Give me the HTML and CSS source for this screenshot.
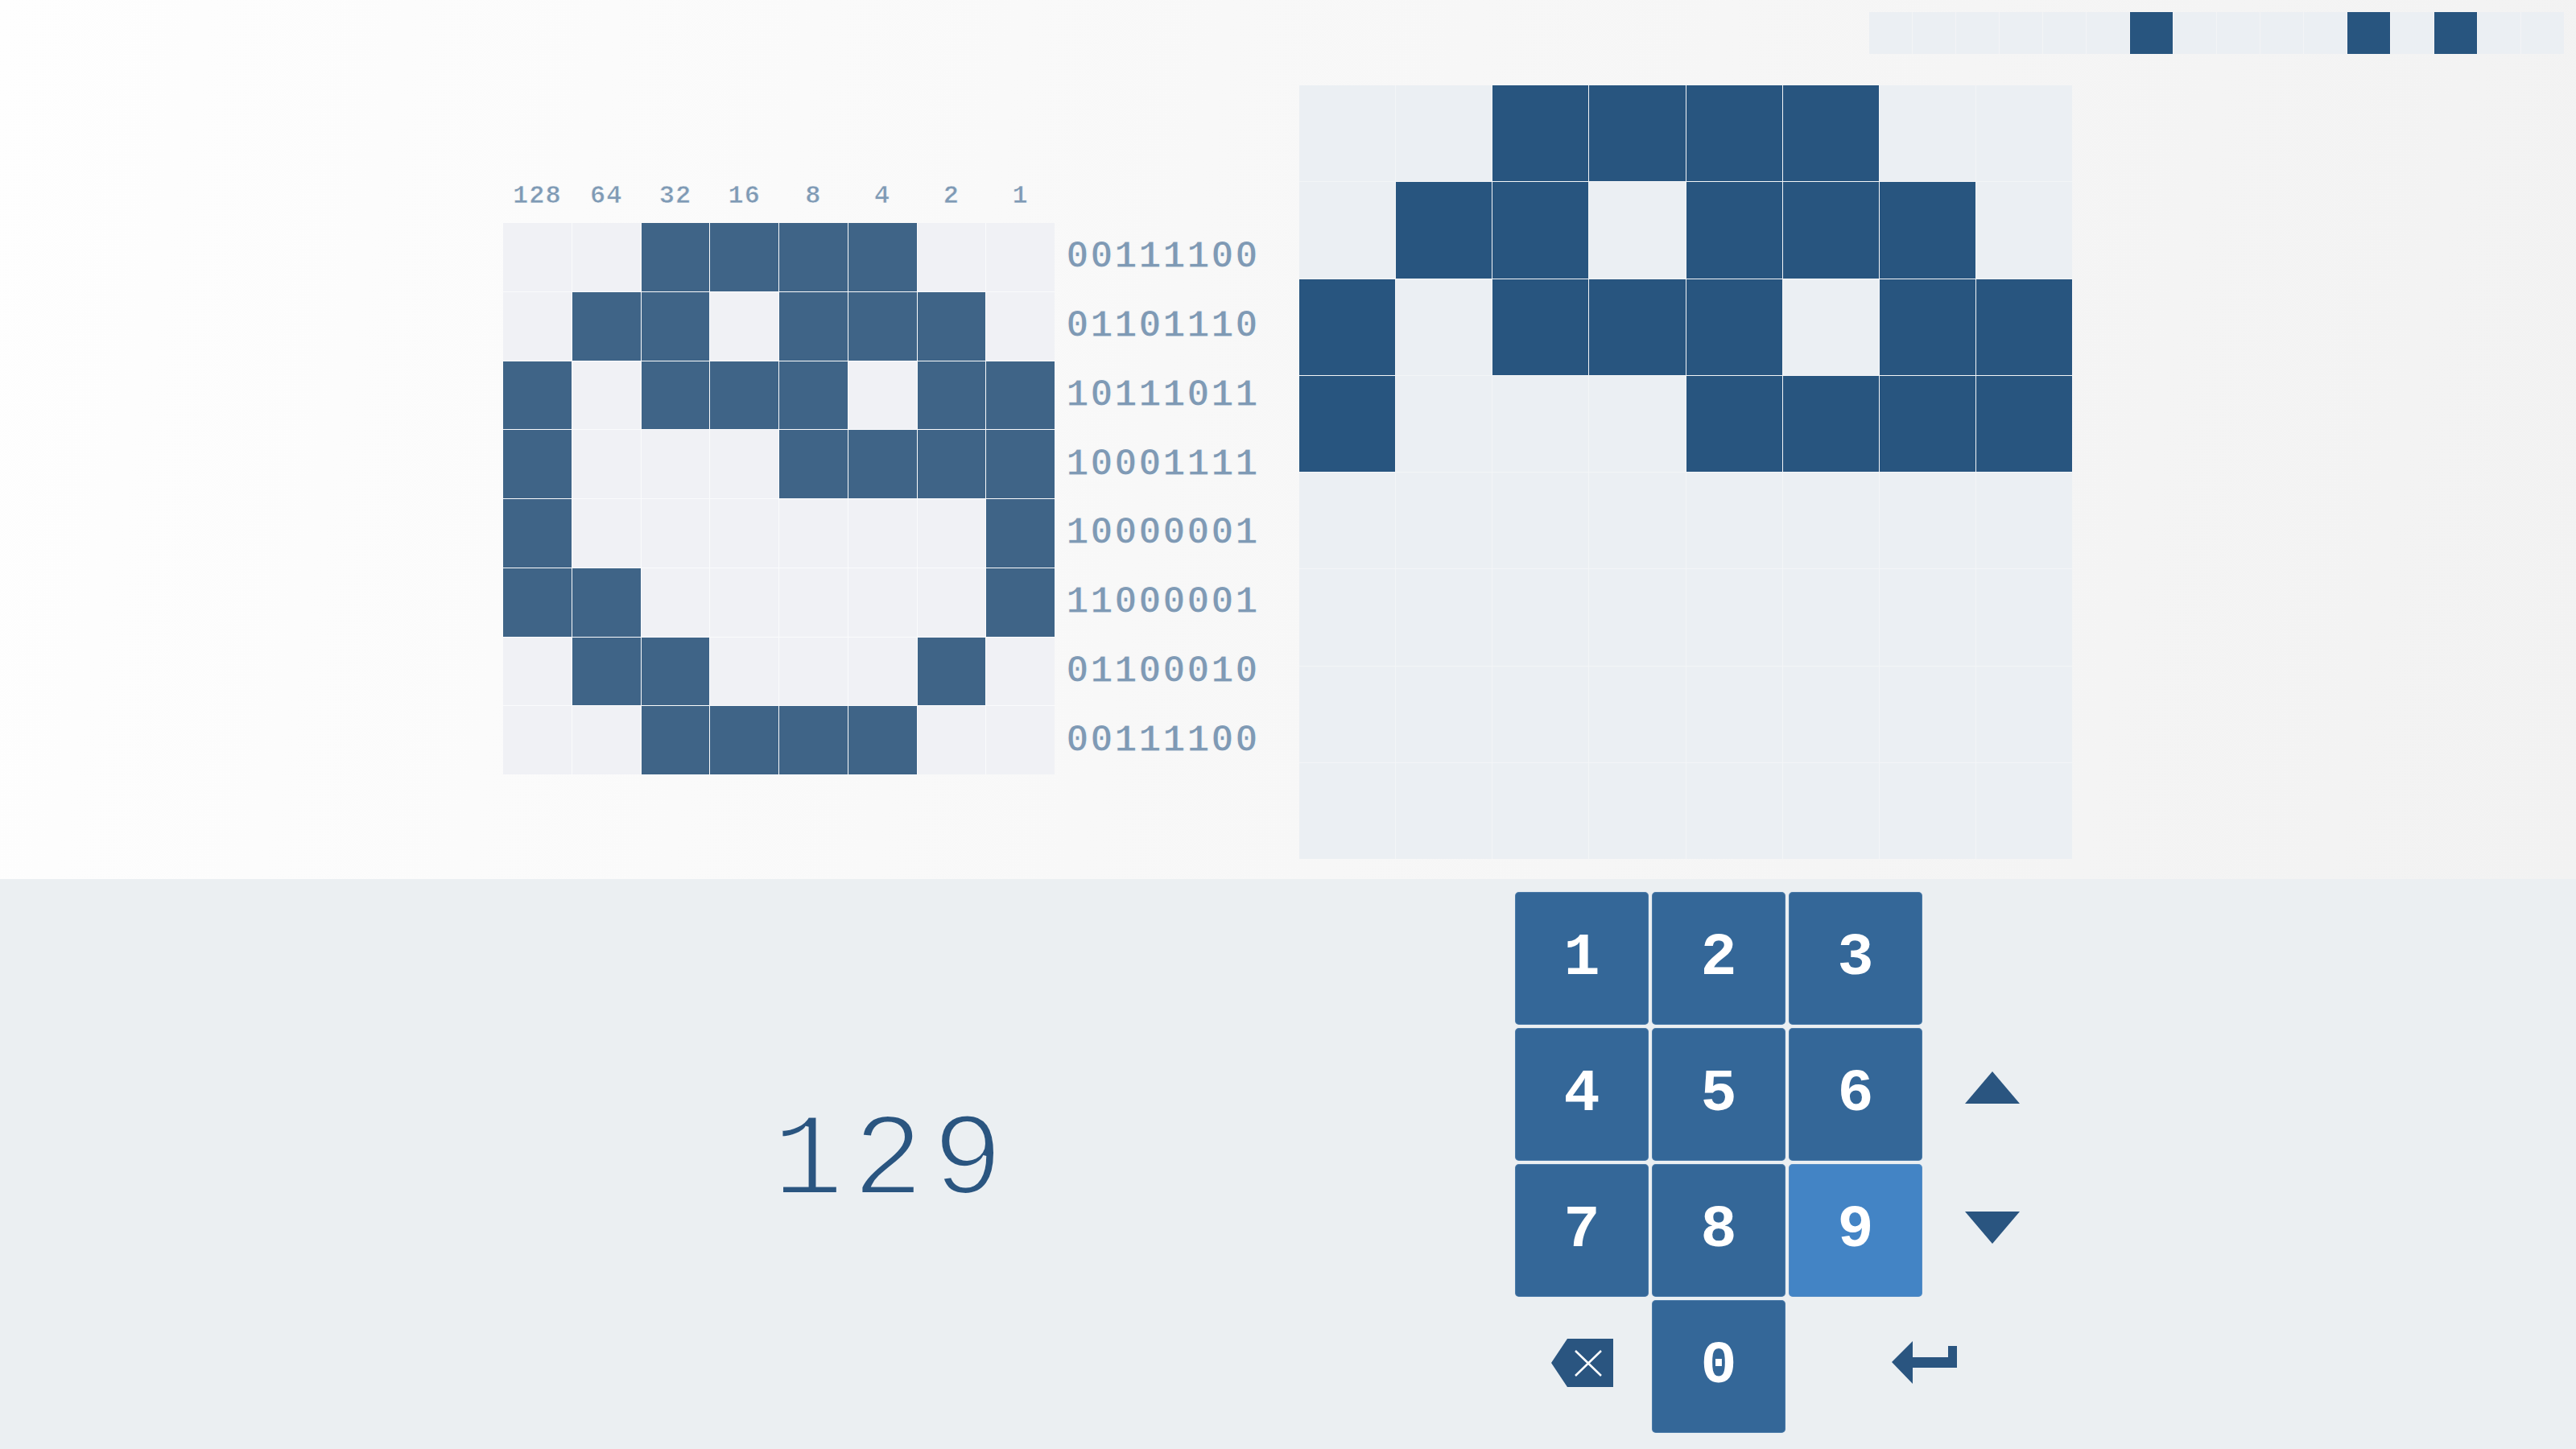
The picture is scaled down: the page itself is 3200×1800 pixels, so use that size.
FILE: index.html
```html
<!DOCTYPE html>
<html lang="en">
<head>
<meta charset="utf-8">
<title>Binary Pixel Encoder</title>
<link rel="stylesheet" href="styles.css">
</head>
<body>
<div class="top">
  <div class="bits">
    <div class="b"></div><div class="b"></div><div class="b"></div><div class="b"></div>
    <div class="b"></div><div class="b"></div><div class="b on"></div><div class="b"></div>
    <div class="b"></div><div class="b"></div><div class="b"></div><div class="b on"></div>
    <div class="b"></div><div class="b on"></div><div class="b"></div><div class="b"></div>
  </div>
  <div class="stage">
    <div class="encoder">
      <div class="heads">
        <span>128</span><span>64</span><span>32</span><span>16</span><span>8</span><span>4</span><span>2</span><span>1</span>
      </div>
      <div class="spacer"></div>
      <div class="pix">
        <i></i><i></i><i class="on"></i><i class="on"></i><i class="on"></i><i class="on"></i><i></i><i></i>
        <i></i><i class="on"></i><i class="on"></i><i></i><i class="on"></i><i class="on"></i><i class="on"></i><i></i>
        <i class="on"></i><i></i><i class="on"></i><i class="on"></i><i class="on"></i><i></i><i class="on"></i><i class="on"></i>
        <i class="on"></i><i></i><i></i><i></i><i class="on"></i><i class="on"></i><i class="on"></i><i class="on"></i>
        <i class="on"></i><i></i><i></i><i></i><i></i><i></i><i></i><i class="on"></i>
        <i class="on"></i><i class="on"></i><i></i><i></i><i></i><i></i><i></i><i class="on"></i>
        <i></i><i class="on"></i><i class="on"></i><i></i><i></i><i></i><i class="on"></i><i></i>
        <i></i><i></i><i class="on"></i><i class="on"></i><i class="on"></i><i class="on"></i><i></i><i></i>
      </div>
      <div class="codes">
        <span>00111100</span><span>01101110</span><span>10111011</span><span>10001111</span>
        <span>10000001</span><span>11000001</span><span>01100010</span><span>00111100</span>
      </div>
    </div>
    <div class="canvas">
      <i></i><i></i><i class="on"></i><i class="on"></i><i class="on"></i><i class="on"></i><i></i><i></i>
      <i></i><i class="on"></i><i class="on"></i><i></i><i class="on"></i><i class="on"></i><i class="on"></i><i></i>
      <i class="on"></i><i></i><i class="on"></i><i class="on"></i><i class="on"></i><i></i><i class="on"></i><i class="on"></i>
      <i class="on"></i><i></i><i></i><i></i><i class="on"></i><i class="on"></i><i class="on"></i><i class="on"></i>
      <i></i><i></i><i></i><i></i><i></i><i></i><i></i><i></i>
      <i></i><i></i><i></i><i></i><i></i><i></i><i></i><i></i>
      <i></i><i></i><i></i><i></i><i></i><i></i><i></i><i></i>
      <i></i><i></i><i></i><i></i><i></i><i></i><i></i><i></i>
    </div>
  </div>
</div>
<div class="bottom">
  <div class="display"><span class="value">129</span></div>
  <div class="keypad">
    <button class="key">1</button>
    <button class="key">2</button>
    <button class="key">3</button>
    <div class="slot"></div>
    <button class="key">4</button>
    <button class="key">5</button>
    <button class="key">6</button>
    <div class="slot arrow up">
      <svg width="68" height="40" viewBox="0 0 68 40"><polygon points="34,0 68,40 0,40"/></svg>
    </div>
    <button class="key">7</button>
    <button class="key">8</button>
    <button class="key active">9</button>
    <div class="slot arrow down">
      <svg width="68" height="40" viewBox="0 0 68 40"><polygon points="0,0 68,0 34,40"/></svg>
    </div>
    <div class="slot icon">
      <svg width="77" height="60" viewBox="0 0 77 60">
        <polygon class="fill" points="0,30 20,0 77,0 77,60 20,60"/>
        <path class="x" d="M30 15 L62 46 M62 15 L30 46"/>
      </svg>
    </div>
    <button class="key">0</button>
    <div class="slot icon enter">
      <svg width="81" height="53" viewBox="0 0 81 53">
        <path class="fill" d="M0 26 L26 0 L26 20 L70 20 L70 6 L81 6 L81 33 L26 33 L26 53 Z"/>
      </svg>
    </div>
  </div>
</div>
</body>
</html>
```
FILE: styles.css
```css
* { box-sizing: border-box; margin: 0; padding: 0; }
html, body { width: 3200px; height: 1800px; overflow: hidden; }
body {
  font-family: "Liberation Mono", "Courier New", monospace;
  background: #ebeff2;
}

.top {
  height: 1092px;
  display: flex;
  flex-direction: column;
  background: linear-gradient(100deg, #fefefe 0%, #f8f8f8 45%, #f2f2f2 100%);
}

/* bit strip */
.bits {
  align-self: flex-end;
  margin: 15px 15px 0 0;
  width: 863px;
  height: 52px;
  display: grid;
  grid-template-columns: repeat(16, 1fr);
  gap: 1px;
  background: #f3f4f6;
}
.bits .b { background: #ebeff3; }
.bits .b.on { background: #28557f; }

.stage {
  display: flex;
  align-items: flex-start;
}

/* left encoder */
.encoder {
  margin: 155px 0 0 625px;
  display: grid;
  grid-template-columns: 685px 250px;
  grid-template-rows: 44px 685px;
  column-gap: 14px;
  row-gap: 11px;
}
.heads {
  display: grid;
  grid-template-columns: repeat(8, 1fr);
  column-gap: 1px;
  font-weight: bold;
  font-size: 32px;
  line-height: 44px;
  letter-spacing: 1px;
  color: #7f9ab5;
  text-align: center;
  -webkit-text-stroke: 0.6px #fafafa;
}
.pix {
  display: grid;
  grid-template-columns: repeat(8, 1fr);
  grid-template-rows: repeat(8, 1fr);
  gap: 1px;
  background: #fafbfc;
}
.pix i { background: #f0f1f5; }
.pix i.on { background: #3f6487; }
.codes {
  display: grid;
  grid-template-rows: repeat(8, 1fr);
  row-gap: 1px;
  font-weight: bold;
  font-size: 48px;
  letter-spacing: 1.2px;
  color: #7f9ab5;
  -webkit-text-stroke: 1.2px #f8f8f8;
}
.codes span {
  display: flex;
  align-items: center;
}

/* right canvas */
.canvas {
  margin: 39px 0 0 40px;
  width: 960px;
  height: 961px;
  display: grid;
  grid-template-columns: repeat(8, 1fr);
  grid-template-rows: repeat(8, 1fr);
  gap: 1px;
  background: #f3f5f7;
}
.canvas i { background: #ebeff3; }
.canvas i.on { background: #28557f; }

/* bottom */
.bottom {
  height: 708px;
  display: flex;
  align-items: flex-start;
  background: #ebeff2;
}
.display {
  width: 1882px;
  height: 708px;
  padding: 0 0 5px 324px;
  display: flex;
  align-items: center;
  justify-content: center;
}
.value {
  font-size: 147px;
  letter-spacing: 11px;
  margin-right: -11px;
  color: #2a5580;
  -webkit-text-stroke: 4px #ebeff2;
}

.keypad {
  margin-top: 16px;
  display: grid;
  grid-template-columns: repeat(4, 166px);
  grid-template-rows: repeat(4, 165px);
  gap: 4px;
}
.key {
  border: none;
  border-radius: 5px;
  background: #346798;
  color: #ffffff;
  font-family: "Liberation Mono", "Courier New", monospace;
  font-weight: bold;
  font-size: 75px;
  display: flex;
  align-items: center;
  justify-content: center;
  box-shadow: inset 0 0 0 1px rgba(120,160,200,0.35);
}
.key.active { background: #4384c5; }

.slot {
  display: flex;
  align-items: center;
  justify-content: center;
}
.slot svg { display: block; }
.arrow polygon, .fill { fill: #2a5580; }
.arrow.up svg { margin-bottom: 17px; }
.arrow.down svg { margin-bottom: 8px; }
.icon svg { margin-bottom: 10px; }
.x { stroke: #ffffff; stroke-width: 2.5; fill: none; }
.enter { grid-column: 3 / span 2; }
```
